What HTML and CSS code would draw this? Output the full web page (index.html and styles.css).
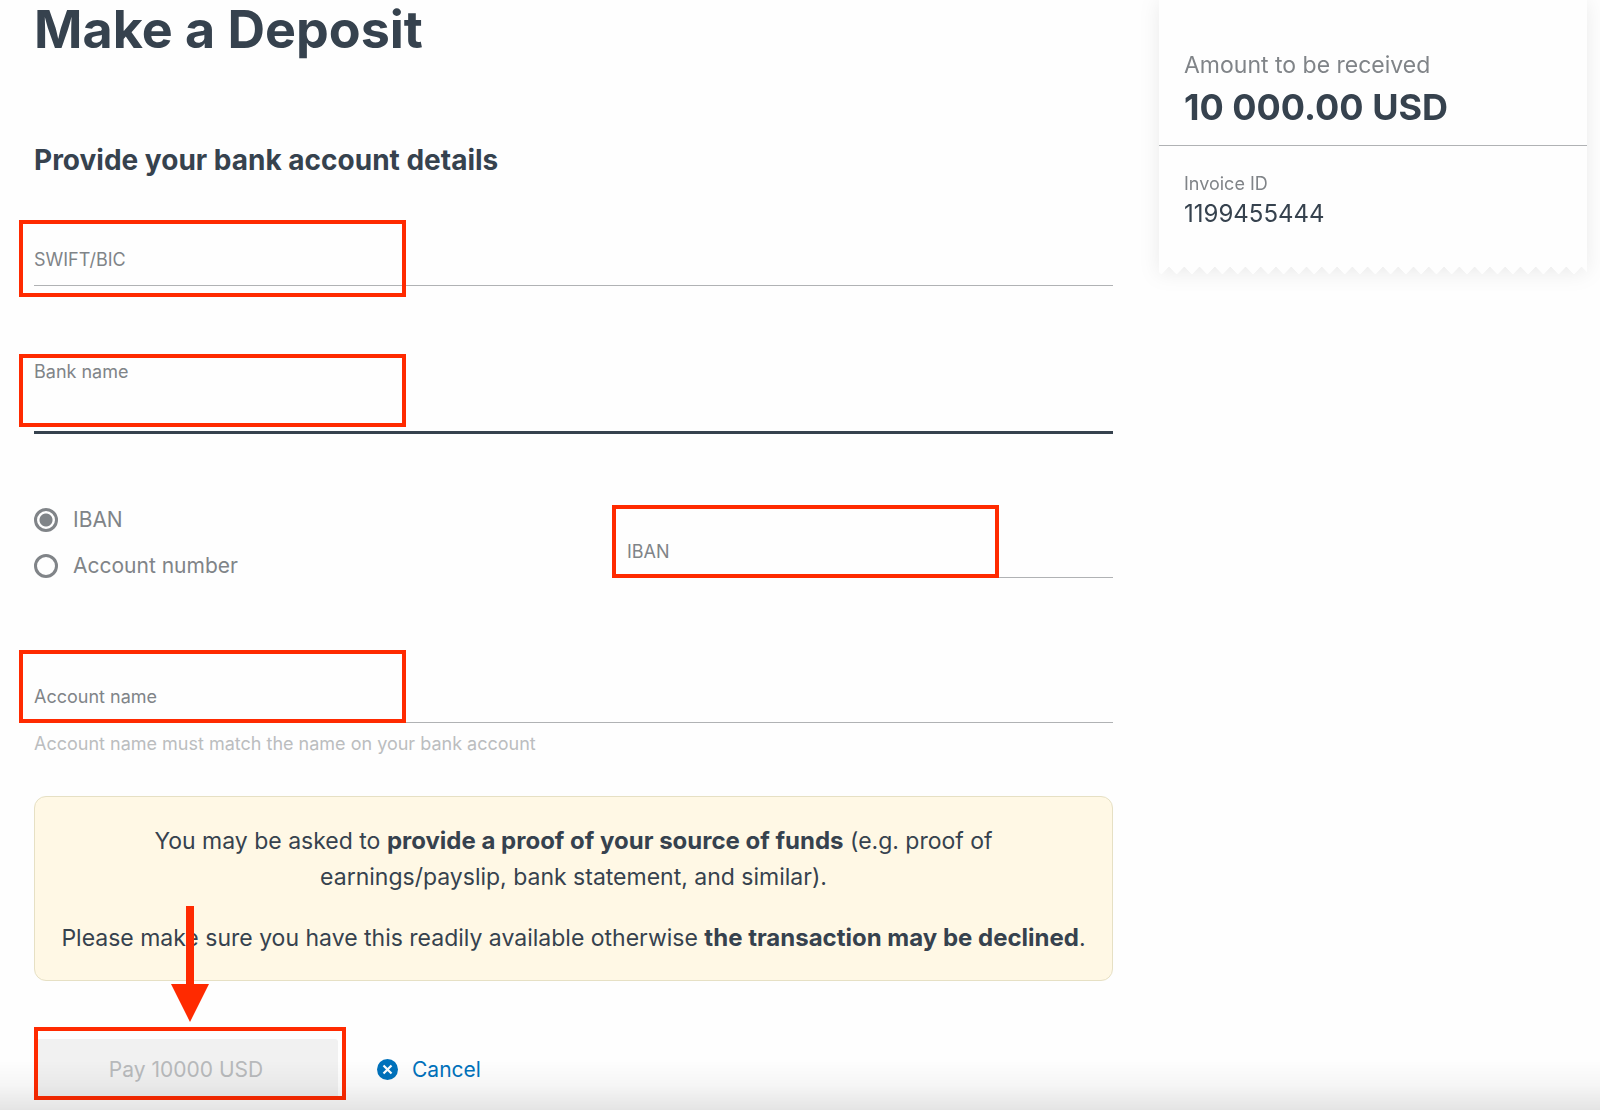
FILE: index.html
```html
<!DOCTYPE html>
<html lang="en">
<head>
    <meta charset="UTF-8">
    <meta name="viewport" content="width=device-width, initial-scale=1.0">
    <title>Make a Deposit</title>
    <link rel="stylesheet" href="styles.css">
</head>
<body>

<div class="page">
    <main>
        <h1>Make a Deposit</h1>

        <form class="deposit-form">
            <h2>Provide your bank account details</h2>

            <div class="field">
                <label for="swift">SWIFT/BIC</label>
                <input type="text" id="swift" name="swift">
                <span class="highlight highlight-swift"></span>
            </div>

            <div class="field field-active">
                <label for="bank">Bank name</label>
                <input type="text" id="bank" name="bank">
                <span class="highlight highlight-bank"></span>
            </div>

            <div class="account-row">
                <div class="options">
                    <label class="option"><input type="radio" name="type" value="iban" checked> IBAN</label>
                    <label class="option"><input type="radio" name="type" value="number"> Account number</label>
                </div>
                <div class="field">
                    <label for="iban">IBAN</label>
                    <input type="text" id="iban" name="iban">
                    <span class="highlight"></span>
                </div>
            </div>

            <div class="field">
                <label for="account-name">Account name</label>
                <input type="text" id="account-name" name="account-name">
                <span class="highlight"></span>
            </div>
            <p class="hint">Account name must match the name on your bank account</p>

            <div class="notice">
                <p>You may be asked to <strong>provide a proof of your source of funds</strong> (e.g. proof of<br> earnings/payslip, bank statement, and similar).</p>
                <p>Please make sure you have this readily available otherwise <strong>the transaction may be declined</strong>.</p>
            </div>

            <div class="actions">
                <div class="pay">
                    <button type="submit" class="pay-button" disabled>Pay 10000 USD</button>
                    <span class="highlight highlight-pay"></span>
                    <svg class="arrow" width="38" height="116" viewBox="0 0 38 116">
                        <path d="M15 0h8v78h15L19 116 0 78h15z" fill="#ff2a00"/>
                    </svg>
                </div>
                <a href="#" class="cancel">
                    <svg width="21" height="21" viewBox="0 0 21 21">
                        <circle cx="10.5" cy="10.5" r="10.5" fill="#0072bc"/>
                        <path d="M6.5 6.5l8 8M14.5 6.5l-8 8" stroke="#fff" stroke-width="2.2"/>
                    </svg>
                    Cancel
                </a>
            </div>
        </form>
    </main>

    <aside class="receipt">
        <div class="receipt-body">
            <div class="amount">
                <p class="amount-label">Amount to be received</p>
                <p class="amount-value">10 000.00 USD</p>
            </div>
            <div class="invoice">
                <p class="invoice-label">Invoice ID</p>
                <p class="invoice-value">1199455444</p>
            </div>
        </div>
    </aside>
</div>

<div class="bottom-fade"></div>

</body>
</html>
```
FILE: styles.css
```css
* {
    box-sizing: border-box;
}

body {
    margin: 0;
    background: #fefefe;
    color: #36424e;
    font-family: Inter, "Liberation Sans", sans-serif;
    font-size: 24px;
}

h1, h2, p {
    margin: 0;
}

.page {
    display: grid;
    grid-template-columns: minmax(0, 1fr) 428px;
    gap: 46px;
    align-items: start;
    padding: 0 13px 0 34px;
}

h1 {
    font-size: 52px;
    line-height: 60px;
    font-weight: 700;
}

h2 {
    margin: 82px 0 34px;
    font-size: 28px;
    line-height: 36px;
    font-weight: 700;
}

/* fields */
.field {
    position: relative;
    display: grid;
    height: 74px;
}

.field label {
    grid-area: 1 / 1;
    align-self: end;
    padding-bottom: 14px;
    font-size: 18px;
    line-height: 24px;
    color: #808488;
}

.field input {
    grid-area: 1 / 1;
    width: 100%;
    padding: 24px 0 0;
    border: 0;
    border-bottom: 1px solid #b0b2b4;
    background: transparent;
    color: inherit;
    font: inherit;
    outline: none;
}

.field-active {
    margin-top: 74px;
}

.field-active label {
    align-self: start;
    padding-bottom: 0;
}

.field-active input {
    border-bottom: 3px solid #36424e;
}

.account-row {
    display: grid;
    grid-template-columns: 1fr 486px;
    margin: 70px 0 67px;
}

.options {
    display: flex;
    flex-direction: column;
    gap: 14px;
}

.option {
    display: flex;
    align-items: center;
    gap: 15px;
    font-size: 21px;
    line-height: 32px;
    color: #808488;
}

.option input {
    appearance: none;
    width: 24px;
    height: 24px;
    margin: 0;
    border: 3px solid #808488;
    border-radius: 50%;
}

.option input:checked {
    background: radial-gradient(circle, #808488 6px, transparent 7px);
}

.hint {
    margin-top: 9px;
    font-size: 18px;
    line-height: 24px;
    color: #bbbdbf;
}

.notice {
    margin-top: 40px;
    padding: 26px 20px 24px;
    border: 1px solid #e6e0c4;
    border-radius: 12px;
    background: #fff8e5;
    font-size: 23px;
    line-height: 36px;
    text-align: center;
}

.notice strong {
    font-size: 24px;
}

.notice p + p {
    margin-top: 25px;
}

/* buttons */
.actions {
    display: flex;
    align-items: center;
    gap: 39px;
    margin-top: 58px;
    font-size: 21px;
}

.pay {
    position: relative;
}

.pay-button {
    display: block;
    width: 304px;
    height: 61px;
    border: 0;
    border-radius: 3px;
    background: #f1f1f1;
    color: #b8babc;
    font: inherit;
}

.cancel {
    display: flex;
    align-items: center;
    gap: 14px;
    color: #0072bc;
    text-decoration: none;
}

/* red marks */
.highlight {
    position: absolute;
    top: 1px;
    left: -15px;
    width: 387px;
    height: 73px;
    border: 4px solid #ff2a00;
    pointer-events: none;
}

.highlight-swift {
    top: 8px;
    height: 77px;
}

.highlight-bank {
    top: -6px;
}

.highlight-pay {
    top: -12px;
    left: 0;
    width: 312px;
}

.arrow {
    position: absolute;
    top: -133px;
    left: 137px;
    pointer-events: none;
}

/* receipt */
.receipt {
    filter: drop-shadow(0 2px 10px rgba(0, 0, 0, 0.08));
}

.receipt-body {
    padding-bottom: 43px;
    background: #fefefe;
    /* straight body plus a row of teeth along the bottom */
    mask:
        linear-gradient(#000, #000) 0 0 / 100% calc(100% - 7px) no-repeat,
        conic-gradient(from -45deg at 50% 100%, #000 90deg, transparent 0) 10px 100% / calc(100% / 28) 7px repeat-x;
}

.amount {
    padding: 48px 25px 13px;
    border-bottom: 1px solid #b0b2b4;
}

.amount-label {
    font-size: 23px;
    line-height: 34px;
    color: #808488;
}

.amount-value {
    font-size: 36px;
    line-height: 50px;
    font-weight: 700;
}

.invoice {
    padding: 25px 25px 0;
}

.invoice-label {
    font-size: 18px;
    line-height: 26px;
    color: #808488;
}

.invoice-value {
    line-height: 34px;
}

/* shade at the bottom edge of the window */
.bottom-fade {
    position: fixed;
    left: 0;
    right: 0;
    bottom: 0;
    height: 50px;
    background: linear-gradient(transparent, rgba(0, 0, 0, 0.03) 50%, rgba(0, 0, 0, 0.1));
    pointer-events: none;
}
```
